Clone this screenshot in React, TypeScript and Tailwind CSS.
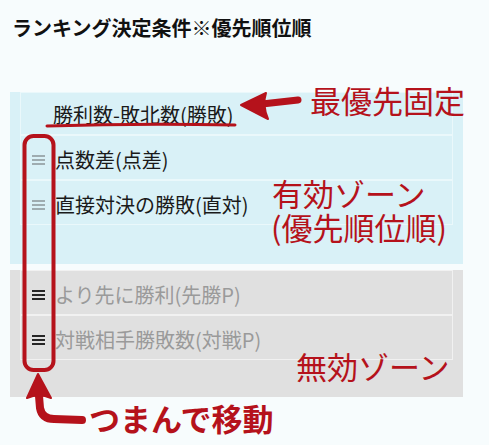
import React from 'react'

const RED = '#b5121b'

type Item = { id: string; label: string }

const activeItems: Item[] = [
  { id: 'diff', label: '点数差(点差)' },
  { id: 'h2h', label: '直接対決の勝敗(直対)' },
]

const inactiveItems: Item[] = [
  { id: 'first', label: 'より先に勝利(先勝P)' },
  { id: 'opp', label: '対戦相手勝敗数(対戦P)' },
]

function Handle({ dark }: { dark?: boolean }) {
  return (
    <svg width="13" height="10" viewBox="0 0 13 10" className="shrink-0">
      <g stroke={dark ? '#111' : '#8a9598'} strokeWidth={dark ? 1.8 : 1.5}>
        <line x1="0" y1="1" x2="13" y2="1" />
        <line x1="0" y1="5" x2="13" y2="5" />
        <line x1="0" y1="9" x2="13" y2="9" />
      </g>
    </svg>
  )
}

function Row({ item, disabled }: { item: Item; disabled?: boolean }) {
  return (
    <div
      className={`flex h-[45px] items-center gap-[10px] border pl-[11px] pt-[4px] ${
        disabled ? 'border-[#f1f1f1] text-[#9a9a9a]' : 'border-[#eaf8fb] text-[#1a1a1a]'
      }`}
    >
      <Handle dark={disabled} />
      <span>{item.label}</span>
    </div>
  )
}

export default function App() {
  return (
    <div
      className="relative h-[445px] w-[489px] overflow-hidden bg-[#f7fcfd] text-[20px]"
      style={{ fontFamily: '"Noto Sans CJK JP", "Noto Sans", sans-serif' }}
    >
      <h1 className="pl-[12px] pt-[13px] text-[20px] font-bold leading-[29px] text-[#111]">
        ランキング決定条件※優先順位順
      </h1>

      {/* 有効ゾーン */}
      <div className="ml-[10px] mt-[50px] h-[172px] w-[453px] bg-[#d9f1f7] px-[10px]">
        <div className="flex h-[43px] items-center border border-[#eaf8fb] pl-[32px] pt-[2px] text-[#1a1a1a]">
          勝利数-敗北数(勝敗)
        </div>
        {activeItems.map((item) => (
          <Row key={item.id} item={item} />
        ))}
      </div>

      {/* 無効ゾーン */}
      <div className="ml-[10px] mt-[6px] h-[127px] w-[453px] bg-[#e0e0e0] px-[10px]">
        {inactiveItems.map((item) => (
          <Row key={item.id} item={item} disabled />
        ))}
      </div>

      {/* 注釈 */}
      <svg className="pointer-events-none absolute inset-0" width="489" height="445" viewBox="0 0 489 445">
        <path d="M47 126 Q140 123 235 125" stroke={RED} strokeWidth="3" fill="none" strokeLinecap="round" />
        <path d="M298 100 L262 104" stroke={RED} strokeWidth="7" fill="none" strokeLinecap="round" />
        <path d="M241 105 L266 93 Q262 105 268 119 Z" fill={RED} stroke={RED} strokeWidth="2" strokeLinejoin="round" />
        <rect x="24.5" y="136" width="29" height="234" rx="9" stroke={RED} strokeWidth="4" fill="none" />
        <path d="M39 396 L40 408 Q42 419 54 419 L82 420" stroke={RED} strokeWidth="8" fill="none" strokeLinecap="round" />
        <path d="M38 374 L51 398 Q39 393 27 398 Z" fill={RED} stroke={RED} strokeWidth="2" strokeLinejoin="round" />
      </svg>

      <div className="absolute left-[310px] top-[84px] text-[31px] leading-none" style={{ color: RED }}>
        最優先固定
      </div>
      <div className="absolute left-[271px] top-[176px] text-[31px] leading-[34px]" style={{ color: RED }}>
        <div className="pl-[1px]">有効ゾーン</div>
        <div>(優先順位順)</div>
      </div>
      <div className="absolute left-[296px] top-[350px] text-[31px] leading-none" style={{ color: RED }}>
        無効ゾーン
      </div>
      <div className="absolute left-[89px] top-[402px] text-[31px] font-bold leading-none" style={{ color: RED }}>
        つまんで移動
      </div>
    </div>
  )
}
